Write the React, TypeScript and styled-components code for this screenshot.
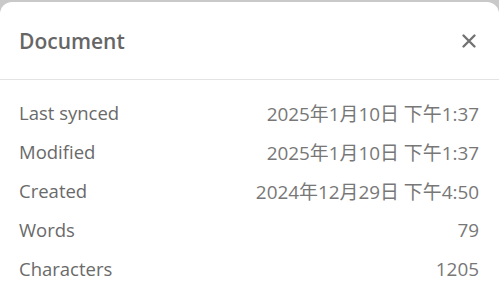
import React from "react";
import styled, { createGlobalStyle } from "styled-components";

const GlobalStyle = createGlobalStyle`
  html, body {
    margin: 0;
    padding: 0;
    background: #c9c9c9;
  }
  body {
    font-family: "Open Sans", "Noto Sans CJK TC", sans-serif;
  }
`;

type InfoRow = {
  label: string;
  value: string;
};

const rows: InfoRow[] = [
  { label: "Last synced", value: "2025年1月10日 下午1:37" },
  { label: "Modified", value: "2025年1月10日 下午1:37" },
  { label: "Created", value: "2024年12月29日 下午4:50" },
  { label: "Words", value: "79" },
  { label: "Characters", value: "1205" },
];

export default function App() {
  return (
    <>
      <GlobalStyle />
      <S.Page>
        <S.Panel>
          <S.Header>
            <S.Title>Document</S.Title>
            <S.CloseButton aria-label="Close">
              <svg width="16" height="16" viewBox="0 0 16 16">
                <path
                  d="M2.5 2.5 L13.5 13.5 M13.5 2.5 L2.5 13.5"
                  stroke="#737373"
                  strokeWidth="2.4"
                  strokeLinecap="round"
                />
              </svg>
            </S.CloseButton>
          </S.Header>
          <S.List>
            {rows.map((row) => (
              <S.Row key={row.label}>
                <S.Label>{row.label}</S.Label>
                <S.Value>{row.value}</S.Value>
              </S.Row>
            ))}
          </S.List>
        </S.Panel>
      </S.Page>
    </>
  );
}

const S = {
  Page: styled.div`
    width: 499px;
    height: 296px;
    padding-top: 2px;
    box-sizing: border-box;
    overflow: hidden;
  `,
  Panel: styled.div`
    height: 100%;
    background: #ffffff;
    border-radius: 12px 12px 0 0;
  `,
  Header: styled.div`
    height: 77px;
    display: flex;
    align-items: center;
    justify-content: space-between;
    padding: 0 22px 0 19px;
    border-bottom: 1px solid #e3e3e3;
  `,
  Title: styled.h2`
    margin: 0;
    font-size: 21px;
    font-weight: 600;
    color: #666666;
  `,
  CloseButton: styled.button`
    border: none;
    background: none;
    padding: 0;
    display: flex;
    cursor: pointer;
  `,
  List: styled.div`
    padding: 13px 20px 0 19px;
  `,
  Row: styled.div`
    height: 39px;
    display: flex;
    align-items: center;
    justify-content: space-between;
    font-size: 18.5px;
    color: #6a6a6a;
  `,
  Label: styled.span``,
  Value: styled.span`
    font-size: 18.9px;
    color: #777777;
  `,
};
